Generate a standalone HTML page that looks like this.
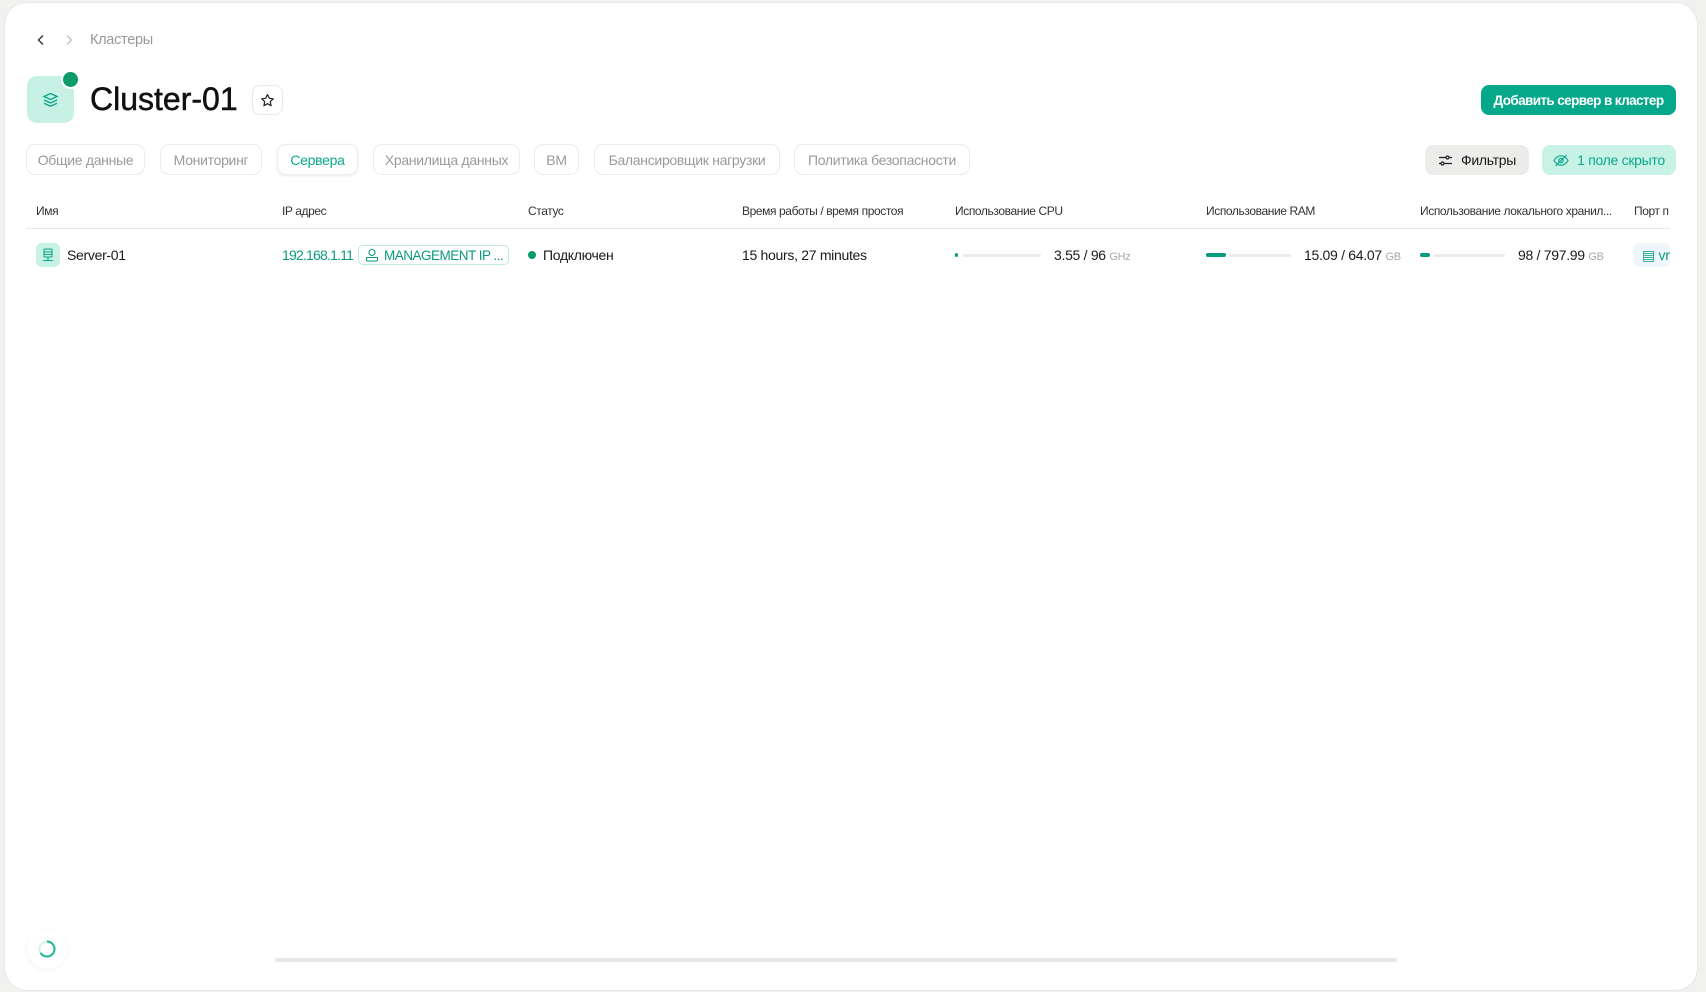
<!DOCTYPE html>
<html><head><meta charset="utf-8"><style>
*{box-sizing:border-box;margin:0;padding:0}
body{width:1706px;height:992px;background:#f1f1f0;font-family:"Liberation Sans",sans-serif;color:#1a1a1a;overflow:hidden;position:relative;letter-spacing:-0.3px}
.card{position:absolute;left:5px;top:3px;width:1692px;height:987px;background:#fff;border-radius:22px;box-shadow:0 0 0 1px #e8e8e8}
.a{position:absolute;white-space:nowrap}
.tab{position:absolute;top:144px;height:31px;border:1px solid #ececec;border-radius:9px;font-size:14px;color:#9a9a9a;display:flex;align-items:center;justify-content:center}
.th{position:absolute;top:204px;font-size:12px;color:#333;letter-spacing:-0.4px}
.td{position:absolute;top:247px;font-size:14px;color:#1a1a1a;line-height:16px}
.bar{position:absolute;top:254px;height:3px;background:#ececec;border-radius:2px}
.fill{position:absolute;top:253px;height:4px;background:#0a9a7e;border-radius:2px}
.u{color:#a8a8a8;font-size:11px}
</style></head><body>
<div class="card"></div>
<svg class="a" style="left:35px;top:34px" width="12" height="12" viewBox="0 0 12 12"><path d="M8 1.5L3.5 6 8 10.5" fill="none" stroke="#333" stroke-width="1.4"/></svg>
<svg class="a" style="left:63px;top:34px" width="12" height="12" viewBox="0 0 12 12"><path d="M4 1.5L8.5 6 4 10.5" fill="none" stroke="#bbb" stroke-width="1.2"/></svg>
<div class="a" style="left:90px;top:32px;font-size:14.5px;color:#999">Кластеры</div>
<div class="a" style="left:27px;top:76px;width:47px;height:47px;border-radius:10px;background:#c8f1e6"></div>
<svg class="a" style="left:42px;top:91px" width="17" height="17" viewBox="0 0 17 17"><g fill="none" stroke="#0aa88a" stroke-width="1.4"><path d="M2 5.5L8.5 2.5 15 5.5 8.5 8.5Z"/><path d="M2 9L8.5 12 15 9"/><path d="M2 12.2L8.5 15.2 15 12.2"/></g></svg>
<div class="a" style="left:61px;top:70px;width:19px;height:19px;border-radius:50%;background:#0a9a6c;border:2.5px solid #fff"></div>
<div class="a" style="left:90px;top:81px;font-size:32px;color:#111;letter-spacing:0;-webkit-text-stroke:0.5px #111">Cluster-01</div>
<div class="a" style="left:252px;top:85px;width:31px;height:30px;border:1px solid #e8e8e8;border-radius:8px"></div>
<svg class="a" style="left:260px;top:93px" width="15" height="15" viewBox="0 0 15 15"><path d="M7.5 1.5L9.3 5.3 13.3 5.8 10.3 8.6 11.1 12.7 7.5 10.7 3.9 12.7 4.7 8.6 1.7 5.8 5.7 5.3Z" fill="none" stroke="#222" stroke-width="1.2" stroke-linejoin="round"/></svg>
<div class="a" style="left:1481px;top:85px;width:195px;height:30px;border-radius:8px;background:#05a88a;color:#fff;font-size:13.5px;font-weight:bold;letter-spacing:-0.6px;display:flex;align-items:center;justify-content:center">Добавить сервер в кластер</div>
<div class="tab" style="left:26px;width:119px">Общие данные</div>
<div class="tab" style="left:160px;width:102px">Мониторинг</div>
<div class="tab" style="left:277px;width:81px;color:#0aa88a;box-shadow:0 1px 3px rgba(0,0,0,.08)">Сервера</div>
<div class="tab" style="left:373px;width:147px">Хранилища данных</div>
<div class="tab" style="left:534px;width:45px">ВМ</div>
<div class="tab" style="left:594px;width:186px">Балансировщик нагрузки</div>
<div class="tab" style="left:794px;width:176px">Политика безопасности</div>
<div class="a" style="left:1425px;top:145px;width:104px;height:30px;border-radius:8px;background:#ececea;font-size:14px;display:flex;align-items:center;justify-content:center;gap:8px"><svg width="15" height="13" viewBox="0 0 15 13"><g fill="none" stroke="#222" stroke-width="1.2"><path d="M1 3.5h7M11 3.5h3M1 9.5h2M6 9.5h8"/><circle cx="9.5" cy="3.5" r="1.5"/><circle cx="4.5" cy="9.5" r="1.5"/></g></svg>Фильтры</div>
<div class="a" style="left:1542px;top:145px;width:134px;height:30px;border-radius:8px;background:#c9f2e6;color:#0aa88a;font-size:14px;display:flex;align-items:center;justify-content:center;gap:8px"><svg width="16" height="13" viewBox="0 0 16 13"><g fill="none" stroke="#0aa88a" stroke-width="1.2"><path d="M1 6.5C3 3 5.5 1.8 8 1.8S13 3 15 6.5C13 10 10.5 11.2 8 11.2S3 10 1 6.5Z"/><circle cx="8" cy="6.5" r="2.2"/><path d="M2.5 12L13.5 1"/></g></svg>1 поле скрыто</div>
<div class="th" style="left:36px">Имя</div>
<div class="th" style="left:282px">IP адрес</div>
<div class="th" style="left:528px">Статус</div>
<div class="th" style="left:742px">Время работы / время простоя</div>
<div class="th" style="left:955px">Использование CPU</div>
<div class="th" style="left:1206px">Использование RAM</div>
<div class="th" style="left:1420px">Использование локального хранил...</div>
<div class="th" style="left:1634px">Порт п</div>
<div class="a" style="left:26px;top:228px;width:1644px;height:1px;background:#e8e8e8"></div>
<div class="a" style="left:36px;top:243px;width:24px;height:24px;border-radius:6px;background:#c8f1e6"></div>
<svg class="a" style="left:41px;top:248px" width="14" height="14" viewBox="0 0 14 14"><g fill="none" stroke="#0aa88a" stroke-width="1.1"><rect x="3" y="1" width="8" height="8" rx="1"/><path d="M3 4h8M3 6.5h8M7 9v3M2 12.5h10"/></g></svg>
<div class="td" style="left:67px">Server-01</div>
<div class="td" style="left:282px;color:#0a9a7e;letter-spacing:-0.8px">192.168.1.11</div>
<div class="a" style="left:358px;top:245px;width:151px;height:20px;border:1px solid #bfe9dd;border-radius:5px;color:#0a9a7e;font-size:13.5px;letter-spacing:-0.5px;display:flex;align-items:center;padding-left:6px;gap:5px"><svg width="14" height="14" viewBox="0 0 14 14"><g fill="none" stroke="#0a9a7e" stroke-width="1.1"><circle cx="7" cy="4.5" r="3"/><rect x="1.5" y="9.5" width="11" height="3.5" rx=".5"/></g></svg>MANAGEMENT IP ...</div>
<div class="a" style="left:528px;top:251px;width:8px;height:8px;border-radius:50%;background:#0a9a6c"></div>
<div class="td" style="left:543px">Подключен</div>
<div class="td" style="left:742px">15 hours, 27 minutes</div>
<div class="fill" style="left:955px;width:3px"></div><div class="bar" style="left:963px;width:78px"></div>
<div class="td" style="left:1054px">3.55 / 96 <span class="u">GHz</span></div>
<div class="fill" style="left:1206px;width:20px"></div><div class="bar" style="left:1229px;width:62px"></div>
<div class="td" style="left:1304px">15.09 / 64.07 <span class="u">GB</span></div>
<div class="fill" style="left:1420px;width:10px"></div><div class="bar" style="left:1433px;width:72px"></div>
<div class="td" style="left:1518px">98 / 797.99 <span class="u">GB</span></div>
<div class="a" style="left:1634px;top:243px;width:36px;height:24px;border-radius:5px;background:#eef5fb;overflow:hidden;color:#0a9a7e;font-size:14px;padding:4px 0 0 8px">▤ vr</div>
<div class="a" style="left:275px;top:958px;width:1122px;height:4px;border-radius:2px;background:#e6e6e4"></div>
<div class="a" style="left:27px;top:929px;width:40px;height:40px;border-radius:50%;background:#fff;box-shadow:0 1px 4px rgba(0,0,0,.06)"></div>
<svg class="a" style="left:37px;top:939px" width="20" height="20" viewBox="0 0 20 20"><circle cx="10" cy="10" r="7.5" fill="none" stroke="#d5f3ea" stroke-width="2"/><path d="M10 2.5A7.5 7.5 0 1 1 3.5 13.8" fill="none" stroke="#1cb894" stroke-width="2"/></svg>
</body></html>
